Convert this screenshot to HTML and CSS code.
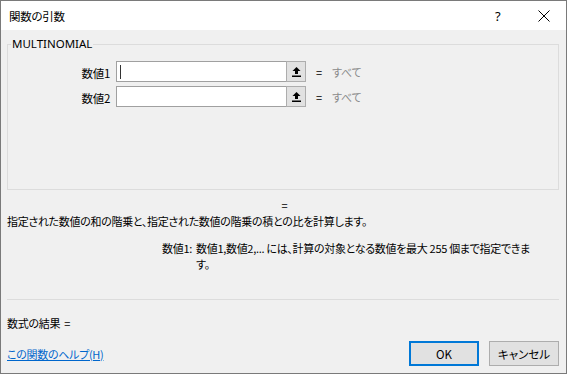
FILE: index.html
```html
<!DOCTYPE html>
<html lang="ja">
<head>
<meta charset="utf-8">
<title>関数の引数</title>
<link rel="stylesheet" href="styles.css">
</head>
<body>
<div class="window">
  <div class="titlebar">
    <span class="title">関数の引数</span>
    <span class="help">?</span>
    <span class="close"><svg width="12" height="12" viewBox="0 0 12 12"><path d="M0.5 0.5 L11.5 11.5 M11.5 0.5 L0.5 11.5" stroke="#000" stroke-width="1" fill="none"/></svg></span>
  </div>
  <div class="body">
    <fieldset class="group">
      <legend class="legend">MULTINOMIAL</legend>
      <div class="args">
        <div class="arg-row">
          <span class="arg-label">数値1</span>
          <span class="arg-input"><span class="caret"></span></span>
          <span class="ref-btn"><svg width="9" height="10" viewBox="0 0 9 10"><path d="M4.5 0 L8.5 4 L6 4 L6 7 L3 7 L3 4 L0.5 4 Z" fill="#000"/><rect x="0" y="8.5" width="9" height="1.5" fill="#000"/></svg></span>
          <span class="arg-eq">=</span>
          <span class="arg-val">すべて</span>
        </div>
        <div class="arg-row">
          <span class="arg-label">数値2</span>
          <span class="arg-input"></span>
          <span class="ref-btn"><svg width="9" height="10" viewBox="0 0 9 10"><path d="M4.5 0 L8.5 4 L6 4 L6 7 L3 7 L3 4 L0.5 4 Z" fill="#000"/><rect x="0" y="8.5" width="9" height="1.5" fill="#000"/></svg></span>
          <span class="arg-eq">=</span>
          <span class="arg-val">すべて</span>
        </div>
      </div>
    </fieldset>
    <div class="result-eq">=</div>
    <p class="desc">指定された数値の和の階乗と、指定された数値の階乗の積との比を計算します。</p>
    <div class="argdesc">
      <span class="argdesc-name">数値1:</span>
      <span class="argdesc-text"><span class="nowrap">数値1,数値2,... には、計算の対象となる数値を最大 255 個まで指定できま</span><br>す。</span>
    </div>
    <div class="sep"></div>
    <div class="formula">数式の結果 =</div>
    <div class="footer">
      <a class="help-link" href="#">この関数のヘルプ(H)</a>
      <div class="buttons">
        <button class="btn btn-primary">OK</button>
        <button class="btn">キャンセル</button>
      </div>
    </div>
  </div>
</div>
</body>
</html>
```
FILE: styles.css
```css
* { box-sizing: border-box; }
html, body { margin: 0; padding: 0; }
body {
  width: 567px;
  height: 374px;
  overflow: hidden;
  font-family: "Noto Sans CJK JP", sans-serif;
  font-size: 11px;
  font-feature-settings: "palt";
  letter-spacing: -0.3px;
  color: #000;
  background: #f0f0f0;
}
.window {
  width: 567px;
  height: 374px;
  border: 1px solid #7a7a7a;
  background: #f0f0f0;
  display: flex;
  flex-direction: column;
}
.titlebar {
  height: 29px;
  background: #fff;
  display: flex;
  align-items: center;
  padding-left: 8px;
  flex: none;
}
.title { flex: 1; line-height: 16px; font-size: 11.5px; }
.help { width: 12px; margin-right: 31px; font-family: "Noto Sans", sans-serif; font-size: 13px; }
.close { width: 12px; height: 12px; margin-right: 16px; display: flex; }
.body {
  flex: 1;
  padding: 0 7px 0 6px;
  display: flex;
  flex-direction: column;
}
.group {
  margin: 6px 0 0 0;
  padding: 9px 0 0 0;
  border: 1px solid #dcdcdc;
  min-width: 0;
}
.legend {
  padding: 0 1px;
  margin-left: 3px;
  line-height: 16px;
  font-family: "Noto Sans", "Noto Sans CJK JP", sans-serif;
  font-size: 11.5px;
  letter-spacing: 0;
}
.args {
  height: 128px;
  display: flex;
  flex-direction: column;
  gap: 4px;
}
.arg-row {
  display: flex;
  align-items: center;
  height: 21px;
}
.arg-label {
  width: 102px;
  margin-right: 6px;
  text-align: right;
  line-height: 16px;
  padding-top: 3px;
  font-size: 11.5px;
}
.arg-input {
  width: 170px;
  height: 21px;
  background: #fff;
  border: 1px solid #a0a0a0;
  border-right: none;
  display: flex;
  align-items: center;
  padding-left: 3px;
}
.caret {
  width: 1px;
  height: 14px;
  background: #333;
}
.ref-btn {
  width: 20px;
  height: 21px;
  background: #e1e1e1;
  border: 1px solid #adadad;
  display: flex;
  align-items: center;
  justify-content: center;
}
.arg-eq { margin-left: 10px; width: 8px; line-height: 16px; }
.arg-val { margin-left: 8px; color: #8a8a8a; line-height: 16px; }
.result-eq {
  margin-top: 7px;
  line-height: 16px;
  text-align: center;
  padding-left: 3px;
}
.desc {
  margin: 0;
  line-height: 16px;
}
.argdesc {
  margin-top: 11px;
  display: flex;
  padding-left: 155px;
  line-height: 16px;
}
.argdesc-name { width: 34px; flex: none; white-space: nowrap; }
.argdesc-text { flex: 1; min-width: 0; }
.nowrap { white-space: nowrap; }
.sep {
  margin-top: 27px;
  height: 1px;
  background: #dcdcdc;
}
.formula {
  margin-top: 15px;
  line-height: 16px;
  word-spacing: 2px;
}
.footer {
  margin-top: 10px;
  display: flex;
  align-items: center;
  justify-content: space-between;
}
.help-link {
  color: #0066cc;
  text-decoration: underline;
  line-height: 16px;
}
.buttons { display: flex; gap: 10px; }
.btn {
  width: 70px;
  height: 25px;
  background: #e1e1e1;
  border: 1px solid #adadad;
  font-family: "Noto Sans CJK JP", sans-serif;
  font-feature-settings: "palt";
  font-size: 11.5px;
  color: #000;
  padding: 0;
}
.btn-primary {
  border: 2px solid #0078d7;
}
```
